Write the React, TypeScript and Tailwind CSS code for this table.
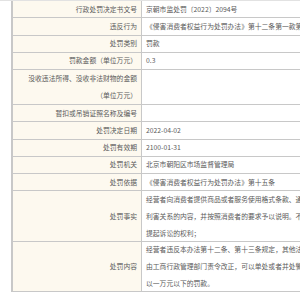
import React from 'react';

type Row = { label: string[]; value: string[]; h: string };

const rows: Row[] = [
  { label: ['行政处罚决定书文号'], value: ['京朝市监处罚〔2022〕2094号'], h: 'h-[17.25px]' },
  { label: ['违反行为'], value: ['《侵害消费者权益行为处罚办法》第十二条第一款第三项、第四项'], h: 'h-[17.25px]' },
  { label: ['处罚类别'], value: ['罚款'], h: 'h-[17.25px]' },
  { label: ['罚款金额（单位万元）'], value: ['0.3'], h: 'h-[17.25px]' },
  { label: ['没收违法所得、没收非法财物的金额', '（单位万元）'], value: [], h: 'h-[35px]' },
  { label: ['暂扣或吊销证照名称及编号'], value: [], h: 'h-[17.25px]' },
  { label: ['处罚决定日期'], value: ['2022-04-02'], h: 'h-[17.25px]' },
  { label: ['处罚有效期'], value: ['2100-01-31'], h: 'h-[17.25px]' },
  { label: ['处罚机关'], value: ['北京市朝阳区市场监督管理局'], h: 'h-[17.25px]' },
  { label: ['处罚依据'], value: ['《侵害消费者权益行为处罚办法》第十五条'], h: 'h-[17.25px]' },
  {
    label: ['处罚事实'],
    value: [
      '经营者向消费者提供商品或者服务使用格式条款、通知、声明、店堂告示等的',
      '利害关系的内容，并按照消费者的要求予以说明。不得作出含有下列内容的规定',
      '提起诉讼的权利；',
    ],
    h: 'h-[51px]',
  },
  {
    label: ['处罚内容'],
    value: [
      '经营者违反本办法第十二条、第十三条规定，其他法律、法规有规定的',
      '由工商行政管理部门责令改正，可以单处或者并处警告，处以违法所得三倍',
      '以一万元以下的罚款。',
    ],
    h: 'h-[50px]',
  },
];

export default function App() {
  return (
    <div
      className="w-[300px] h-[300px] overflow-hidden bg-white text-[6.8px] text-[#5a5a5a]"
      style={{ fontFamily: '"Noto Sans CJK SC", "Noto Sans", sans-serif' }}
    >
      <div className="h-[1px] bg-[#e2e2e2]" />
      <div className="ml-[11px] border-l-2 border-[#c8c8c8] w-[400px]">
        {rows.map((r, i) => (
          <div key={i} className={`flex ${r.h} border-b border-[#c8c8c8]`}>
            <div className="w-[129px] shrink-0 bg-[#fdf9ef] border-r border-[#c8c8c8] flex flex-col justify-center items-end pr-[4px] leading-[17px]">
              {r.label.map((l, j) => (
                <span key={j} className="whitespace-nowrap">{l}</span>
              ))}
            </div>
            <div className="flex-1 flex flex-col justify-center pl-[4px] leading-[17px] overflow-hidden">
              {r.value.map((v, j) => (
                <span key={j} className="whitespace-nowrap">{v}</span>
              ))}
            </div>
          </div>
        ))}
      </div>
    </div>
  );
}
